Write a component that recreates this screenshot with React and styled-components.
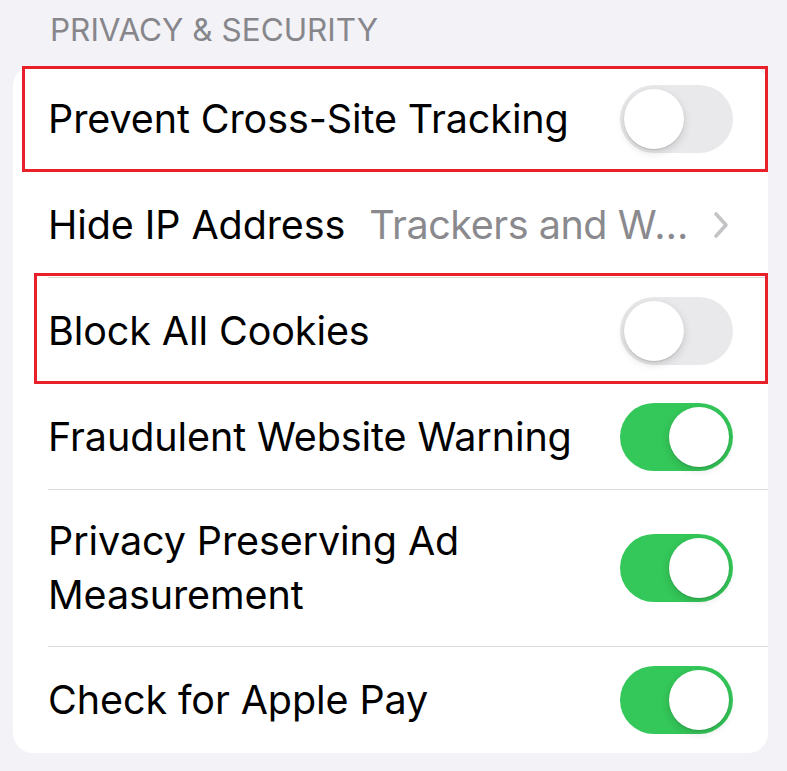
import styled, { createGlobalStyle } from 'styled-components'

const GlobalStyle = createGlobalStyle`
  html, body {
    margin: 0;
    padding: 0;
    background: #f2f2f7;
  }
  body {
    font-family: Inter, "Noto Sans", "Liberation Sans", sans-serif;
    -webkit-font-smoothing: antialiased;
  }
`

const rows = [
  { label: 'Prevent Cross-Site Tracking', toggle: false, highlight: { left: -26, top: 0 } },
  { label: 'Hide IP Address', value: 'Trackers and Websites' },
  { label: 'Block All Cookies', toggle: false, highlight: { left: -14, top: -5 } },
  { label: 'Fraudulent Website Warning', toggle: true },
  { label: 'Privacy Preserving Ad Measurement', toggle: true, wrap: true },
  { label: 'Check for Apple Pay', toggle: true },
]

const App = () => {
  return (
    <Page>
      <GlobalStyle />
      <SectionHeader>PRIVACY &amp; SECURITY</SectionHeader>
      <Card>
        {rows.map((row, i) => (
          <Row key={row.label} $last={i === rows.length - 1}>
            {row.highlight && (
              <Highlight $left={row.highlight.left} $top={row.highlight.top} />
            )}
            <Label $wrap={row.wrap}>{row.label}</Label>
            {row.value !== undefined ? (
              <Detail>
                <Value>{row.value}</Value>
                <Chevron viewBox="0 0 16 28">
                  <path d="M3 3 L13 14 L3 25" />
                </Chevron>
              </Detail>
            ) : (
              <Switch $on={row.toggle}>
                <Knob $on={row.toggle} />
              </Switch>
            )}
          </Row>
        ))}
      </Card>
    </Page>
  )
}

export default App

const Page = styled.div`
  width: 787px;
  height: 771px;
  box-sizing: border-box;
  padding: 0 19px 0 13px;
  background: #f2f2f7;
  overflow: hidden;
`

const SectionHeader = styled.div`
  height: 66px;
  box-sizing: border-box;
  padding: 10px 0 0 37px;
  font-size: 31.5px;
  line-height: 40px;
  color: #86868b;
`

const Card = styled.div`
  background: #ffffff;
  border-radius: 20px;
`

const Row = styled.div`
  position: relative;
  margin-left: 35px;
  padding: 24px 35px 24px 0;
  min-height: 106px;
  box-sizing: border-box;
  display: flex;
  align-items: center;
  gap: 24px;
  border-bottom: ${({ $last }) => ($last ? 'none' : '1px solid #d9d9dd')};
`

const Highlight = styled.div`
  position: absolute;
  left: ${({ $left }) => $left}px;
  right: 0;
  top: ${({ $top }) => $top}px;
  bottom: -1px;
  border: 3px solid #e8202a;
  pointer-events: none;
`

const Label = styled.div`
  flex: ${({ $wrap }) => ($wrap ? '0 1 440px' : '0 0 auto')};
  font-size: 39.5px;
  line-height: 54px;
  color: #000;
  letter-spacing: -0.1px;
  white-space: ${({ $wrap }) => ($wrap ? 'normal' : 'nowrap')};
`

const Detail = styled.div`
  flex: 1;
  min-width: 0;
  display: flex;
  align-items: center;
  justify-content: flex-end;
  gap: 18px;
`

const Value = styled.div`
  min-width: 0;
  font-size: 39.5px;
  line-height: 54px;
  color: #8a8a8e;
  letter-spacing: -0.45px;
  white-space: nowrap;
  overflow: hidden;
  text-overflow: ellipsis;
`

const Chevron = styled.svg`
  flex: 0 0 auto;
  width: 16px;
  height: 28px;
  margin-right: 4px;
  fill: none;
  stroke: #c4c4c7;
  stroke-width: 3.6;
  stroke-linecap: round;
  stroke-linejoin: round;
`

const Switch = styled.div`
  margin: -7px 0 -7px auto;
  flex: 0 0 auto;
  position: relative;
  width: 113px;
  height: 68px;
  border-radius: 34px;
  background: ${({ $on }) => ($on ? '#34c759' : '#e9e9eb')};
`

const Knob = styled.div`
  position: absolute;
  top: 4px;
  left: ${({ $on }) => ($on ? '49px' : '4px')};
  width: 60px;
  height: 60px;
  border-radius: 50%;
  background: #ffffff;
  box-shadow: 0 3px 8px rgba(0, 0, 0, 0.15), 0 1px 1px rgba(0, 0, 0, 0.12);
`
